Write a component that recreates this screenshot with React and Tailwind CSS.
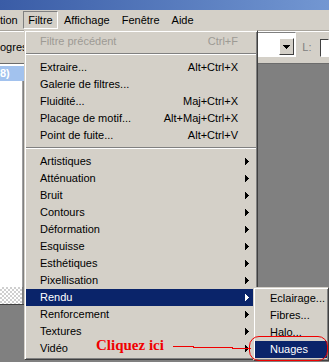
import React from "react";

const filterItems = [
  { label: "Filtre précédent", shortcut: "Ctrl+F", disabled: true },
  { sep: true },
  { label: "Extraire...", shortcut: "Alt+Ctrl+X" },
  { label: "Galerie de filtres..." },
  { label: "Fluidité...", shortcut: "Maj+Ctrl+X" },
  { label: "Placage de motif...", shortcut: "Alt+Maj+Ctrl+X" },
  { label: "Point de fuite...", shortcut: "Alt+Ctrl+V" },
  { sep: true },
  { label: "Artistiques", sub: true },
  { label: "Atténuation", sub: true },
  { label: "Bruit", sub: true },
  { label: "Contours", sub: true },
  { label: "Déformation", sub: true },
  { label: "Esquisse", sub: true },
  { label: "Esthétiques", sub: true },
  { label: "Pixellisation", sub: true },
  { label: "Rendu", sub: true, active: true },
  { label: "Renforcement", sub: true },
  { label: "Textures", sub: true },
  { label: "Vidéo", sub: true },
];

const renduItems = [
  { label: "Eclairage..." },
  { label: "Fibres..." },
  { label: "Halo..." },
  { label: "Nuages", active: true },
];

const Arrow = ({ white }) => (
  <svg width="4" height="7" viewBox="0 0 4 7" shapeRendering="crispEdges">
    <path d="M0 0L4 3.5L0 7Z" fill={white ? "#fff" : "#000"} />
  </svg>
);

const menuBox =
  "absolute bg-[#d4d0c8] border border-t-[#d4d0c8] border-l-[#d4d0c8] border-r-[#404040] border-b-[#404040] shadow-[inset_1px_1px_0_#fff,inset_-1px_-1px_0_#808080] py-[2px] px-[1px]";

const Separator = () => (
  <div className="h-[9px] pt-[3px]">
    <div className="h-[1px] bg-[#808080]" />
    <div className="h-[1px] bg-white" />
  </div>
);

const App = () => {
  return (
    <div className="relative w-[329px] h-[362px] overflow-hidden flex flex-col bg-[#808080] font-['Liberation_Sans',Arial,sans-serif] text-[11px] text-black">
      {/* title bar */}
      <div className="h-[10px] bg-gradient-to-r from-[#3a5ca6] to-[#7397d2]" />

      {/* menu bar */}
      <div className="h-[21px] bg-[#d4d0c8] border-b border-[#a8a49c] flex items-center">
        <span className="w-[23px] whitespace-nowrap">tion</span>
        <span className="w-[35px] h-[18px] flex items-center justify-center border border-t-[#808080] border-l-[#808080] border-r-white border-b-white">
          Filtre
        </span>
        <span className="ml-[6px]">Affichage</span>
        <span className="ml-[12px]">Fenêtre</span>
        <span className="ml-[12px]">Aide</span>
      </div>

      {/* options bar */}
      <div className="h-[32px] bg-[#d4d0c8] border-t border-white flex items-center">
        <span className="w-[24px] whitespace-nowrap">ogres</span>
        <div className="ml-[216px] w-[60px] h-[25px] self-start bg-white border border-t-[#808080] border-l-[#808080] border-r-white border-b-white flex items-end justify-end pr-[1px] pb-[1px]">
          <div className="w-[15px] h-[17px] bg-[#d4d0c8] border border-t-white border-l-white border-r-[#404040] border-b-[#404040] flex items-center justify-center">
            <svg width="7" height="4" viewBox="0 0 7 4" shapeRendering="crispEdges">
              <path d="M0 0H7L3.5 4Z" fill="#000" />
            </svg>
          </div>
        </div>
        <span className="ml-[6px] text-[#808080]">L:</span>
        <div className="ml-[8px] w-[10px] h-[18px] bg-white border border-t-[#404040] border-l-[#404040] border-r-white border-b-white" />
      </div>

      {/* body */}
      <div className="flex-1 flex border-t border-[#6c6c6c]">
        <div className="w-[24px] flex flex-col">
          <div className="h-[2px] bg-white" />
          <div className="h-[15px] bg-[#a2c2ee] text-white font-bold leading-[15px]">8)</div>
          <div className="h-[206px] bg-white border-r border-[#a0a0a0] mr-[1px]" />
          <div className="h-[17px] mr-[2px] bg-[repeating-conic-gradient(#cfcfcf_0%_25%,#ffffff_0%_50%)] bg-[length:4px_4px]" />
          <div className="h-[1px] bg-[#404040]" />
          <div className="flex-1 bg-[#808080]" />
        </div>
        <div className="flex-1 bg-[#808080]" />
      </div>

      {/* Filtre menu */}
      <div className={`${menuBox} left-[24px] top-[30px] w-[234px]`}>
        {filterItems.map((item, i) =>
          item.sep ? (
            <Separator key={i} />
          ) : (
            <div
              key={i}
              className={`h-[17px] flex items-center pl-[14px] whitespace-nowrap ${
                item.active ? "bg-[#0a246a] text-white" : ""
              } ${item.disabled ? "text-[#9d9a94]" : ""}`}
            >
              <span className="flex-1">{item.label}</span>
              {item.shortcut && <span>{item.shortcut}</span>}
              <span className="w-[18px] pl-[7px] flex items-center">
                {item.sub && <Arrow white={item.active} />}
              </span>
            </div>
          )
        )}
      </div>

      {/* Rendu submenu */}
      <div className={`${menuBox} left-[253px] top-[287px] w-[76px]`}>
        {renduItems.map((item) => (
          <div
            key={item.label}
            className={`h-[17px] flex items-center pl-[15px] whitespace-nowrap ${
              item.active ? "bg-[#0a246a] text-white" : ""
            }`}
          >
            {item.label}
          </div>
        ))}
      </div>

      {/* annotation */}
      <span className="absolute left-[96px] top-[335px] text-[15px] leading-[20px] font-bold text-[#f00000] font-['Liberation_Serif','Times_New_Roman',serif]">
        Cliquez ici
      </span>
      <svg className="absolute left-0 top-0" width="329" height="362" shapeRendering="crispEdges">
        <polyline
          points="173,346.5 193,346.5 194,347.5 232,347.5 233,348.5 251,348.5"
          fill="none"
          stroke="#f00000"
          strokeWidth="1"
        />
      </svg>
      <div className="absolute left-[249px] top-[336px] w-[79px] h-[25px] rounded-[10px] border border-[#f00000]" />
    </div>
  );
};

export default App;
